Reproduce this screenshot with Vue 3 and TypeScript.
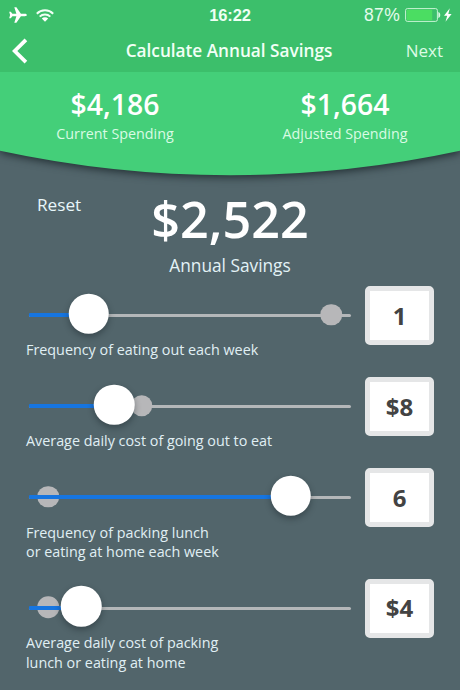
<script setup lang="ts">
interface SliderRow {
  id: string
  lines: string[]
  display: string
  thumb: number
  ghost: number
}

// Thumb and ghost positions are offsets along the track, in percent.
const rows: SliderRow[] = [
  { id: 'eat-out', lines: ['Frequency of eating out each week'], display: '1', thumb: 18.5, ghost: 93.8 },
  { id: 'eat-cost', lines: ['Average daily cost of going out to eat'], display: '$8', thumb: 26.4, ghost: 35 },
  { id: 'pack', lines: ['Frequency of packing lunch', 'or eating at home each week'], display: '6', thumb: 81.3, ghost: 6 },
  { id: 'pack-cost', lines: ['Average daily cost of packing', 'lunch or eating at home'], display: '$4', thumb: 16.2, ghost: 6 },
]
</script>

<template>
  <main class="screen">
    <header class="header">
      <div class="status">
        <div class="signals">
          <svg class="plane" viewBox="0 0 18 16" width="18" height="16">
            <path d="M17.8 8c0-.75-.9-1.200-1.900-1.200h-4L7.400.3H5.300L7.400 6.800H3.400L1.800 4.800H.2L1.100 8l-.9 3.200h1.600L3.400 9.200h4L5.300 15.700h2.100l4.500-6.500h4c1 0 1.900-.45 1.900-1.200z" fill="#fff" />
          </svg>
          <svg class="wifi" viewBox="0 0 18 13" width="18" height="13">
            <g fill="none" stroke="#f0fff4" stroke-width="2">
              <path d="M.8 4.700a11.700 11.700 0 0 1 16.400 0" />
              <path d="M3.700 7.600a7.500 7.500 0 0 1 10.600 0" />
            </g>
            <path d="M9 12.800 5.800 9.600a4.600 4.600 0 0 1 6.400 0z" fill="#fff" />
          </svg>
        </div>
        <span class="clock">16:22</span>
        <div class="power">
          <span class="percent">87%</span>
          <svg viewBox="0 0 47 14" width="47" height="14">
            <rect x=".6" y=".6" width="31.800" height="12.800" rx="1.800" fill="none" stroke="#c9f5d6" />
            <rect x="1.700" y="1.700" width="25.500" height="10.600" fill="#4bdd62" />
            <path d="M33.300 4c2.600.5 2.600 5.500 0 6z" fill="#d9f8e2" />
            <path d="M44.800.2 39 7.700h3.200l-1.700 6.100 6.100-7.700h-3.300z" fill="#fff" />
          </svg>
        </div>
      </div>
      <nav class="nav">
        <button class="back" aria-label="Back">
          <svg viewBox="0 0 16 26" width="16" height="26">
            <path d="M13.900 1.800 2.700 13l11.200 11.200" fill="none" stroke="#fff" stroke-width="3.800" />
          </svg>
        </button>
        <h1 class="title">Calculate Annual Savings</h1>
        <button class="next">Next</button>
      </nav>
    </header>

    <section class="summary">
      <svg class="arc" viewBox="0 0 460 124" width="460" height="124">
        <path d="M-20 0H480V74.300L460 78.700A1092 1092 0 0 1 0 78.700L-20 74.300z" fill="#44cf79" />
      </svg>
      <div class="figure">
        <strong>$4,186</strong>
        <span>Current Spending</span>
      </div>
      <div class="figure">
        <strong>$1,664</strong>
        <span>Adjusted Spending</span>
      </div>
    </section>

    <section class="result">
      <button class="reset">Reset</button>
      <div class="total">
        <strong>$2,522</strong>
        <span>Annual Savings</span>
      </div>
    </section>

    <section class="rows">
      <div v-for="row in rows" :key="row.id" class="row" :class="{ tall: row.lines.length > 1 }">
        <div class="control">
          <div class="slider">
            <div class="track"></div>
            <i class="ghost" :style="{ left: row.ghost + '%' }"></i>
            <div class="fill" :style="{ width: row.thumb + '%' }"></div>
            <i class="thumb" :style="{ left: row.thumb + '%' }"></i>
          </div>
          <p class="label">
            <span v-for="line in row.lines" :key="line">{{ line }}</span>
          </p>
        </div>
        <output class="value">{{ row.display }}</output>
      </div>
    </section>
  </main>
</template>

<style>
body {
  margin: 0;
  background: #52656b;
}
</style>

<style scoped>
.screen {
  width: 460px;
  height: 690px;
  overflow: hidden;
  background: #52656b;
  color: #fff;
  font-family: "Open Sans", "Noto Sans", sans-serif;
}
button {
  border: 0;
  padding: 0;
  background: none;
  color: inherit;
  font-family: inherit;
}
.header {
  height: 72px;
  background: #3cbf6b;
}
.status {
  display: grid;
  grid-template-columns: 1fr auto 1fr;
  align-items: center;
  height: 30px;
  padding: 0 8px 0 9px;
  font-family: "Liberation Sans", Arial, sans-serif;
  font-size: 17.500px;
}
.signals {
  display: flex;
  align-items: center;
  gap: 9px;
}
.clock {
  margin-right: 1px;
  font-weight: 700;
  font-size: 16.500px;
  letter-spacing: -0.1px;
  color: #effff4;
}
.power {
  display: flex;
  justify-content: flex-end;
  align-items: center;
  gap: 5px;
}
.percent {
  padding-top: 1px;
  color: #e4fcec;
  letter-spacing: 0.3px;
}
.nav {
  display: grid;
  grid-template-columns: 60px 1fr 60px;
  align-items: center;
  height: 40px;
  padding: 1px 17px 0 12px;
}
.back {
  display: flex;
}
.title {
  margin: 0 0 0 3px;
  text-align: center;
  font-size: 17.200px;
  line-height: 24px;
  font-weight: 600;
  color: #f2fff6;
  white-space: nowrap;
}
.next {
  text-align: right;
  font-size: 17px;
  line-height: 24px;
  color: #dcfbe5;
}
.summary {
  position: relative;
  display: grid;
  grid-template-columns: 1fr 1fr;
  height: 103px;
  box-sizing: border-box;
  padding-top: 13px;
}
.arc {
  position: absolute;
  inset: 0;
  filter: drop-shadow(0 2px 4px rgba(15, 25, 30, 0.75));
  clip-path: inset(0);
}
.figure {
  position: relative;
  display: flex;
  flex-direction: column;
  align-items: center;
}
.figure strong {
  font-size: 28.400px;
  line-height: 38px;
  font-weight: 600;
}
.figure span {
  margin-top: 1px;
  font-size: 14.300px;
  line-height: 20px;
  color: #d9fbe4;
}
.result {
  position: relative;
  display: grid;
  grid-template-columns: 90px 280px 90px;
  align-items: start;
  height: 111px;
  box-sizing: border-box;
  padding-top: 13px;
}
.reset {
  margin: 5px 0 0 37px;
  text-align: left;
  font-size: 17.200px;
  line-height: 24px;
  color: #e8f6fa;
}
.total {
  display: flex;
  flex-direction: column;
  align-items: center;
}
.total strong {
  font-size: 50.300px;
  line-height: 62px;
  font-weight: 600;
}
.total span {
  margin-top: 4px;
  font-size: 17.300px;
  line-height: 24px;
  color: #e3f2f6;
}
.rows {
  display: flex;
  flex-direction: column;
}
.row {
  display: grid;
  grid-template-columns: 322px 69px;
  column-gap: 14px;
  align-items: start;
  height: 91px;
  padding-left: 29px;
}
.row.tall {
  height: 110.500px;
}
.slider {
  position: relative;
  display: flex;
  align-items: center;
  height: 54px;
}
.track {
  width: 100%;
  height: 3px;
  margin-top: 5px;
  border-radius: 2px;
  background: #b4b7b9;
}
.fill {
  position: absolute;
  left: 0;
  top: 27px;
  height: 4px;
  border-radius: 1px;
  background: #1675e0;
}
.ghost,
.thumb {
  position: absolute;
  border-radius: 50%;
  transform: translate(-50%, -50%);
}
.ghost {
  top: 28.600px;
  width: 21.500px;
  height: 21.500px;
  background: #b7b7b9;
}
.thumb {
  top: 27.700px;
  width: 40.500px;
  height: 40.500px;
  background: #fff;
  box-shadow: 0 3px 6px rgba(20, 30, 35, 0.4);
}
.label {
  margin: 0 0 0 -3px;
  font-size: 14.350px;
  line-height: 19.500px;
  color: #e0eff4;
  white-space: nowrap;
}
.tall .label {
  padding-top: 0.600px;
}
.label span {
  display: block;
}
.value {
  display: grid;
  place-items: center;
  height: 59px;
  box-sizing: border-box;
  border: 5.500px solid #e5e6e7;
  border-radius: 5px;
  background: #fff;
  color: #434343;
  font-size: 24px;
  font-weight: 700;
  line-height: 30px;
}
</style>
